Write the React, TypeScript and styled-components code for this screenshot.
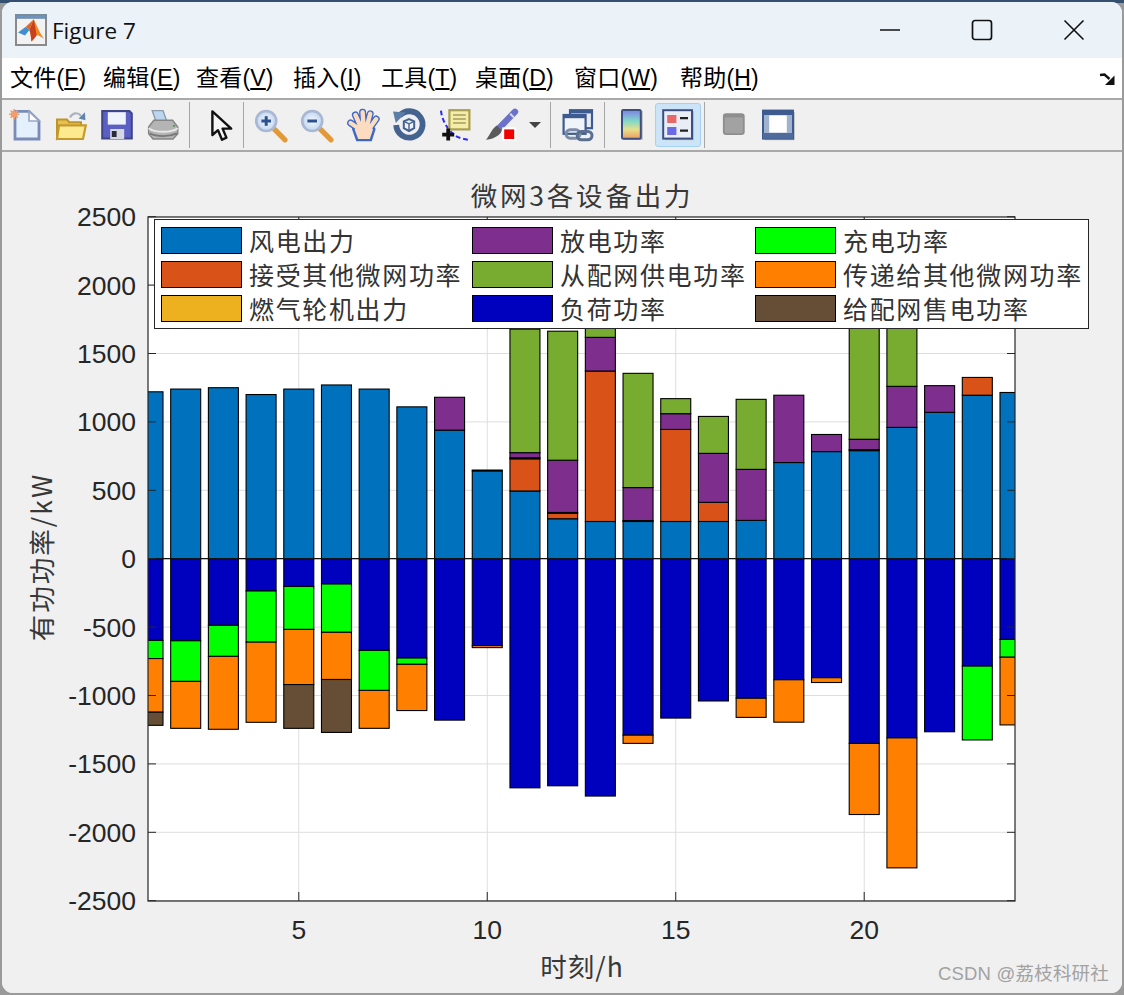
import React from 'react';
import styled, { createGlobalStyle } from 'styled-components';

const GlobalStyle = createGlobalStyle`
  html, body {
    margin: 0;
    height: 995px;
    overflow: hidden;
    background: linear-gradient(#35506e 0 3px, #9a9a9a 3px);
  }
`;

const CJK = `"Noto Sans CJK SC", "Liberation Sans", sans-serif`;
const LATIN = `"Liberation Sans", "Noto Sans CJK SC", sans-serif`;

const Window = styled.div`
  width: 1120px;
  height: 991px;
  margin: 2px;
  border-radius: 11px;
  overflow: hidden;
  background: #f0f0f0;
  display: flex;
  flex-direction: column;
`;

const TitleBar = styled.div`
  height: 56px;
  flex: none;
  background: #ebf3f9;
  display: flex;
  align-items: center;
  padding: 0 2px 0 13px;
`;

const WindowTitle = styled.span`
  margin-left: 5px;
  font: 22.5px "Open Sans", sans-serif;
  color: #111;
  flex: 1;
`;

const Control = styled.div`
  width: 92px;
  height: 56px;
  display: flex;
  align-items: center;
  justify-content: center;
`;

const MenuBar = styled.div`
  height: 42px;
  flex: none;
  background: #fff;
  border-bottom: 2px solid #a9a9a9;
  box-sizing: border-box;
  display: flex;
  align-items: center;
  padding-left: 8px;
  position: relative;
`;

const MenuItem = styled.span<{ $w: number }>`
  width: ${(p) => p.$w}px;
  font: 23px ${LATIN};
  letter-spacing: 0.2px;
  color: #000;
  white-space: nowrap;
  line-height: 40px;
`;

const MenuCorner = styled.svg`
  position: absolute;
  right: 7px;
  top: 15px;
`;

const ToolBar = styled.div`
  height: 52px;
  flex: none;
  box-sizing: border-box;
  background: #f0f0f0;
  border-bottom: 2px solid #a9a9a9;
  display: flex;
  align-items: center;
`;

const ToolButton = styled.div<{ $w?: number; $on?: boolean }>`
  width: ${(p) => p.$w ?? 46}px;
  height: 44px;
  flex: none;
  box-sizing: border-box;
  display: flex;
  align-items: center;
  justify-content: center;
  border-radius: 3px;
  background: ${(p) => (p.$on ? '#cce4f7' : 'transparent')};
  border: 1px solid ${(p) => (p.$on ? '#a5d2f2' : 'transparent')};
`;

const Sep = styled.div`
  width: 1px;
  height: 46px;
  flex: none;
  margin: 0 4px 0 3px;
  background: #a6a6a6;
`;

const Icon = styled.svg<{ $dx?: number; $sharp?: boolean }>`
  width: 32px;
  height: 32px;
  flex: none;
  overflow: visible;
  filter: ${(p) => (p.$sharp ? 'none' : 'blur(0.6px)')};
  transform: translateX(${(p) => p.$dx ?? 0}px);
`;

const Figure = styled.div`
  flex: 1;
  position: relative;
  background: #f0f0f0;
`;

const ChartSvg = styled.svg`
  display: block;
`;

const TickLabel = styled.text`
  font: 26.5px ${LATIN};
  fill: #262626;
`;

const AxisTitle = styled.text<{ $ls: number }>`
  font: 26.5px ${CJK};
  letter-spacing: ${(p) => p.$ls}px;
  fill: #383838;
`;

const Legend = styled.div`
  position: absolute;
  left: 152px;
  top: 67px;
  width: 935px;
  height: 110px;
  box-sizing: border-box;
  background: #fff;
  border: 1px solid #262626;
  padding: 6px 0 0 6px;
  display: grid;
  grid-template-columns: 311px 283px 1fr;
  grid-template-rows: repeat(3, 34px);
  grid-auto-flow: column;
`;

const LegendItem = styled.div`
  display: flex;
  align-items: center;
  height: 28px;
`;

const Swatch = styled.div<{ $c: string }>`
  width: 81px;
  height: 27px;
  flex: none;
  box-sizing: border-box;
  border: 1px solid #000;
  background: ${(p) => p.$c};
`;

const LegendText = styled.span`
  margin-left: 7px;
  font: 25px ${CJK};
  letter-spacing: 1.65px;
  color: #333;
  white-space: nowrap;
`;

const Watermark = styled.div`
  position: absolute;
  right: 13px;
  bottom: 8px;
  font: 18.5px ${LATIN};
  letter-spacing: 0.2px;
  color: #a2a2a2;
  white-space: nowrap;
`;

const C = {
  wind: '#0072bd',
  recv: '#d95319',
  gas: '#edb120',
  dis: '#7e2f8e',
  grid: '#77ac30',
  load: '#0000bf',
  chg: '#00ff00',
  send: '#ff8000',
  sell: '#654e35',
};

const legendItems: [string, string][] = [
  ['风电出力', C.wind],
  ['接受其他微网功率', C.recv],
  ['燃气轮机出力', C.gas],
  ['放电功率', C.dis],
  ['从配网供电功率', C.grid],
  ['负荷功率', C.load],
  ['充电功率', C.chg],
  ['传递给其他微网功率', C.send],
  ['给配网售电功率', C.sell],
];

// cumulative tops per hour: [colour, value]
type Stack = [string, number][];
const up: Stack[] = [
  [[C.wind, 1220]],
  [[C.wind, 1240]],
  [[C.wind, 1250]],
  [[C.wind, 1200]],
  [[C.wind, 1240]],
  [[C.wind, 1270]],
  [[C.wind, 1240]],
  [[C.wind, 1110]],
  [[C.wind, 940], [C.dis, 1180]],
  [[C.wind, 642], [C.gas, 648]],
  [[C.wind, 495], [C.recv, 730], [C.gas, 738], [C.dis, 775], [C.grid, 1678]],
  [[C.wind, 292], [C.recv, 332], [C.gas, 338], [C.dis, 720], [C.grid, 1663]],
  [[C.wind, 272], [C.recv, 1372], [C.dis, 1618], [C.grid, 1735]],
  [[C.wind, 272], [C.gas, 279], [C.dis, 520], [C.grid, 1355]],
  [[C.wind, 272], [C.recv, 945], [C.dis, 1060], [C.grid, 1170]],
  [[C.wind, 272], [C.recv, 412], [C.dis, 770], [C.grid, 1040]],
  [[C.wind, 280], [C.dis, 653], [C.grid, 1165]],
  [[C.wind, 703], [C.dis, 1195]],
  [[C.wind, 783], [C.dis, 908]],
  [[C.wind, 790], [C.gas, 797], [C.dis, 873], [C.grid, 1870]],
  [[C.wind, 960], [C.dis, 1260], [C.grid, 2260]],
  [[C.wind, 1070], [C.dis, 1265]],
  [[C.wind, 1195], [C.recv, 1325]],
  [[C.wind, 1215]],
];
const down: Stack[] = [
  [[C.load, -597], [C.chg, -730], [C.send, -1122], [C.sell, -1218]],
  [[C.load, -600], [C.chg, -897], [C.send, -1240]],
  [[C.load, -487], [C.chg, -714], [C.send, -1247]],
  [[C.load, -236], [C.chg, -610], [C.send, -1196]],
  [[C.load, -203], [C.chg, -517], [C.send, -920], [C.sell, -1240]],
  [[C.load, -185], [C.chg, -538], [C.send, -883], [C.sell, -1270]],
  [[C.load, -670], [C.chg, -963], [C.send, -1240]],
  [[C.load, -726], [C.chg, -772], [C.send, -1110]],
  [[C.load, -1180]],
  [[C.load, -635], [C.send, -650]],
  [[C.load, -1675]],
  [[C.load, -1660]],
  [[C.load, -1735]],
  [[C.load, -1290], [C.send, -1350]],
  [[C.load, -1165]],
  [[C.load, -1040]],
  [[C.load, -1020], [C.send, -1160]],
  [[C.load, -885], [C.send, -1195]],
  [[C.load, -870], [C.send, -905]],
  [[C.load, -1350], [C.send, -1870]],
  [[C.load, -1310], [C.send, -2260]],
  [[C.load, -1265]],
  [[C.load, -785], [C.chg, -1325]],
  [[C.load, -590], [C.chg, -720], [C.send, -1215]],
];

const L = 148;
const R = 1015;
const T = 217;
const B = 901;
const ZERO = 558.7;
const xOf = (h: number) => L + ((h - 1) * (R - L)) / 23;
const yOf = (v: number) => ZERO - (v * (B - T)) / 5000;
const BAR_W = 30;

function Bars({ stacks }: { stacks: Stack[] }) {
  return (
    <>
      {stacks.map((stack, i) => {
        let prev = 0;
        return stack.map(([fill, v], j) => {
          const y0 = yOf(prev);
          const y1 = yOf(v);
          prev = v;
          return (
            <rect
              key={`${i}-${j}`}
              x={xOf(i + 1) - BAR_W / 2}
              y={Math.min(y0, y1)}
              width={BAR_W}
              height={Math.abs(y1 - y0)}
              fill={fill}
              stroke="#000"
              strokeWidth={1.1}
            />
          );
        });
      })}
    </>
  );
}

function Chart() {
  const yTicks = [2500, 2000, 1500, 1000, 500, 0, -500, -1000, -1500, -2000, -2500];
  const xTicks = [5, 10, 15, 20];
  return (
    <ChartSvg width={1120} height={839} viewBox="2 152 1120 839">
      <defs>
        <clipPath id="axes">
          <rect x={L} y={T} width={R - L} height={B - T} />
        </clipPath>
      </defs>
      <rect x={L} y={T} width={R - L} height={B - T} fill="#fff" />
      {yTicks.map((v) => (
        <line key={v} x1={L} x2={R} y1={yOf(v)} y2={yOf(v)} stroke="#dedede" strokeWidth={1} />
      ))}
      {xTicks.map((h) => (
        <line key={h} x1={xOf(h)} x2={xOf(h)} y1={T} y2={B} stroke="#dedede" strokeWidth={1} />
      ))}
      <g clipPath="url(#axes)">
        <Bars stacks={up} />
        <Bars stacks={down} />
      </g>
      <line x1={L} x2={R} y1={ZERO} y2={ZERO} stroke="#111" strokeWidth={1.2} />
      {yTicks.map((v) => (
        <g key={v}>
          <line x1={L} x2={L + 8} y1={yOf(v)} y2={yOf(v)} stroke="#262626" strokeWidth={1} />
          <line x1={R - 8} x2={R} y1={yOf(v)} y2={yOf(v)} stroke="#262626" strokeWidth={1} />
          <TickLabel x={136} y={yOf(v) + 9.5} textAnchor="end">
            {v}
          </TickLabel>
        </g>
      ))}
      {xTicks.map((h) => (
        <g key={h}>
          <line x1={xOf(h)} x2={xOf(h)} y1={B - 9} y2={B} stroke="#262626" strokeWidth={1} />
          <line x1={xOf(h)} x2={xOf(h)} y1={T} y2={T + 9} stroke="#262626" strokeWidth={1} />
          <TickLabel x={xOf(h)} y={939} textAnchor="middle">
            {h}
          </TickLabel>
        </g>
      ))}
      <rect x={L} y={T} width={R - L} height={B - T} fill="none" stroke="#262626" strokeWidth={1.2} />
      <AxisTitle $ls={2.8} x={582} y={206} textAnchor="middle">
        微网3各设备出力
      </AxisTitle>
      <AxisTitle $ls={1} x={582} y={977} textAnchor="middle">
        时刻/h
      </AxisTitle>
      <AxisTitle $ls={2} x={0} y={0} textAnchor="middle" transform="translate(52 557) rotate(-90)">
        有功功率/kW
      </AxisTitle>
    </ChartSvg>
  );
}

const MatlabLogo = () => (
  <Icon viewBox="0 0 16 16" $sharp>
    <rect x="0.5" y="0.5" width="15" height="15" fill="#f2f2f2" stroke="#8a8a8a" />
    <rect x="0.5" y="0.5" width="15" height="1.6" fill="#6d95bd" stroke="#6d8aa8" strokeWidth="0.5" />
    <path d="M1.5 9.2 5.4 6.4 7.2 8 5 10.8z" fill="#3f8fd0" />
    <path d="M5.4 6.4 9.4 2.6 7.2 8z" fill="#d9692c" />
    <path d="M9.4 2.6C10.6 5 12.2 9.4 14.6 12.4 12.6 11.2 11.6 10.4 10.8 10.6 9.8 12 9 13 8.2 13.8 8 11.4 7.6 9 7.2 8z" fill="#f08a24" />
    <path d="M9.4 2.6 7.2 8C7.8 9.4 8 11.4 8.2 13.8 9 13 9.8 12 10.8 10.6 10.4 8 9.8 5 9.4 2.6z" fill="#c9401c" />
  </Icon>
);

const NewIcon = () => (
  <Icon viewBox="0 0 16 16">
    <path d="M3 1.2h7L15 6v9H3z" fill="#e4f0fb" stroke="#7b8bb8" strokeWidth="1.4" />
    <path d="M10 1.2V6h5z" fill="#fbfdff" stroke="#9aa6c6" strokeWidth="0.8" />
    <circle cx="2.6" cy="2.6" r="1.6" fill="#ee8a50" />
    <path d="M2.6 0v5.2M0 2.6h5.2M.8.8l3.6 3.6M4.4.8.8 4.4" stroke="#f0a070" strokeWidth="0.8" />
  </Icon>
);

const OpenIcon = () => (
  <Icon viewBox="0 0 16 16">
    <path d="M1 15V5.2h5l1 1.4h6V9z" fill="#e8c050" stroke="#bd9428" strokeWidth="1" />
    <path d="M1 15 2 8.2h13.4L14 15z" fill="#fde98e" stroke="#c49a2c" strokeWidth="1.1" />
    <path d="M7.5 4.2C8.8 1.8 11.4 1.4 13 3.4" fill="none" stroke="#a8b4c0" strokeWidth="1.1" />
    <path d="M15 1.6 15.2 5.6 11.8 4.8z" fill="#5f85ad" />
  </Icon>
);

const SaveIcon = () => (
  <Icon viewBox="0 0 16 16">
    <path d="M.6 1h13.6l1.2 1.2v12.6H.6z" fill="#5b5fc4" stroke="#3d4585" strokeWidth="1" />
    <rect x="3.4" y="1.6" width="9" height="6.2" fill="#eef2fb" />
    <rect x="4.6" y="10" width="7" height="5" fill="#d4d8e2" />
    <rect x="5.4" y="11" width="2.4" height="3" fill="#2a2a3a" />
  </Icon>
);

const PrintIcon = () => (
  <Icon viewBox="0 0 16 16">
    <path d="M2.6.8H8L10 6.4H4.6z" fill="#bcd6f0" stroke="#8c9cac" strokeWidth="0.7" />
    <path d="M.8 9 3.4 5.6h9.4L15.4 9v3.4L13 15H3L.8 12.4z" fill="#b4b4b4" stroke="#858585" strokeWidth="0.7" />
    <path d="M.8 9.6C4 12 12 12 15.4 9.6" fill="none" stroke="#e8e8e8" strokeWidth="1" />
    <path d="M1.4 12.2C5 14 11 14 15 12.2" fill="none" stroke="#787878" strokeWidth="0.9" />
    <path d="M13 8.4h1" stroke="#3fa04a" strokeWidth="0.9" />
  </Icon>
);

const PointerIcon = () => (
  <Icon viewBox="0 0 16 16" $dx={1}>
    <path d="M5.2 1.2V13L8 10.6 10 15.4 12.2 14.3 10.3 9.8H14.6z" fill="#f6f6f6" stroke="#111" strokeWidth="1.2" strokeLinejoin="round" />
  </Icon>
);

const Magnifier = ({ plus }: { plus?: boolean }) => (
  <Icon viewBox="0 0 16 16">
    <defs>
      <radialGradient id={plus ? 'lensA' : 'lensB'} cx="0.5" cy="0.5" r="0.6">
        <stop offset="0" stopColor="#f4f8ff" />
        <stop offset="1" stopColor="#b8d0ea" />
      </radialGradient>
    </defs>
    <path d="M9.8 10.2 15 15.4" stroke="#e09a3c" strokeWidth="2.6" strokeLinecap="round" />
    <circle cx="5.6" cy="6" r="5" fill={`url(#${plus ? 'lensA' : 'lensB'})`} stroke="#a8b8d4" strokeWidth="1.3" />
    <path d="M3.2 6h4.8" stroke="#2d5190" strokeWidth="1.5" />
    {plus && <path d="M5.6 3.6v4.8" stroke="#2d5190" strokeWidth="1.5" />}
  </Icon>
);

const handFingers = 'M7 10.5 1.8 7M7.4 10 4.2 3M8.4 10 7.8 1.6M9.6 10 11.6 2.4M10.6 10.6 14.6 5';
const HandIcon = () => (
  <Icon viewBox="0 0 16 16">
    <path d={handFingers} stroke="#3d68c4" strokeWidth="3.5" strokeLinecap="round" fill="none" />
    <path d="M3 10C4 7.6 13 7.6 13.8 10L12 15.6H5z" fill="#3d68c4" stroke="#3d68c4" strokeWidth="1" />
    <path d={handFingers} stroke="#fbdcc0" strokeWidth="2.2" strokeLinecap="round" fill="none" />
    <path d="M3.8 10.2C5 8.4 12.4 8.4 13 10.2L11.4 15H5.6z" fill="#fbdcc0" />
  </Icon>
);

const RotateIcon = () => (
  <Icon viewBox="0 0 16 16">
    <path d="M3.2 3.4A6.6 6.6 0 1 1 1.6 8" fill="none" stroke="#44648f" strokeWidth="2.9" />
    <path d="M0 1.2 6.4 1.8 1.4 7z" fill="#5d7ea6" />
    <path d="M5.4 6.2 8 5l2.6 1.2v3.4L8 11 5.4 9.6z" fill="#eef2f7" stroke="#44648f" strokeWidth="1" />
    <path d="M5.4 6.2 8 7.4l2.6-1.2M8 7.4V11" fill="none" stroke="#44648f" strokeWidth="0.7" />
  </Icon>
);

const DataTipIcon = () => (
  <Icon viewBox="0 0 16 16">
    <path d="M1 .8C1.4 6 5 11 8 13.2 10 14.6 13 15.2 15.6 15.6" fill="none" stroke="#2a2af0" strokeWidth="1" strokeDasharray="2.4 1.4" />
    <rect x="5.2" y="0.6" width="10" height="9.6" fill="#f4eca8" stroke="#a8a050" strokeWidth="1.1" />
    <path d="M7 3h6.4M7 5h6.4M7 7h6.4" stroke="#b8b070" strokeWidth="0.9" />
    <path d="M4.6 9.8v6M1.6 12.8h6" stroke="#111" strokeWidth="1.9" />
  </Icon>
);

const BrushIcon = () => (
  <Icon viewBox="0 0 16 16">
    <path d="M15 1.4 7 9.6" stroke="#6c72c8" strokeWidth="3.2" strokeLinecap="round" />
    <path d="M12.6 2.4 14.4 4.2" stroke="#d8dcf4" strokeWidth="1" />
    <path d="M5.8 8.2 8.4 10.8C7.6 13.4 3.4 15.4.4 15.4 2.2 13.6 3 10.4 5.8 8.2z" fill="#5a5a5a" />
    <rect x="8.6" y="9.2" width="7" height="6.8" fill="#fff" />
    <rect x="9.6" y="10.2" width="5" height="4.8" fill="#f00000" />
  </Icon>
);

const LinkIcon = () => (
  <Icon viewBox="0 0 16 16">
    <rect x="4" y="0.6" width="11" height="9" fill="#e6eaf2" stroke="#3d5b90" strokeWidth="1.1" />
    <rect x="4" y="0.6" width="11" height="1.6" fill="#3d5b90" />
    <rect x="0.8" y="3" width="11" height="9.4" fill="#f0f3f8" stroke="#3d5b90" strokeWidth="1.1" />
    <rect x="0.8" y="3" width="11" height="1.6" fill="#3d5b90" />
    <rect x="2" y="10.4" width="7" height="4.2" rx="2.1" fill="none" stroke="#7a8ca8" strokeWidth="1.5" />
    <rect x="7.6" y="11.2" width="7.4" height="4.2" rx="2.1" fill="none" stroke="#5b6f90" strokeWidth="1.5" />
  </Icon>
);

const ColorbarIcon = () => (
  <Icon viewBox="0 0 16 16">
    <defs>
      <linearGradient id="cbar" x1="0" y1="0" x2="0" y2="1">
        <stop offset="0" stopColor="#7f7fe8" />
        <stop offset="0.38" stopColor="#80d8c8" />
        <stop offset="0.68" stopColor="#e6e08c" />
        <stop offset="1" stopColor="#f09a60" />
      </linearGradient>
    </defs>
    <rect x="4" y="1" width="9.4" height="14.4" fill="#bcbcbc" />
    <rect x="3" y="0.5" width="9.4" height="14.4" rx="0.6" fill="url(#cbar)" stroke="#3d4f80" strokeWidth="1" />
  </Icon>
);

const LegendIcon = () => (
  <Icon viewBox="0 0 16 16">
    <rect x="1.6" y="1.2" width="14.4" height="14.4" fill="#bcbcbc" />
    <rect x="0.6" y="0.6" width="14.4" height="14.2" fill="#e9edf5" stroke="#3d4f80" strokeWidth="1" />
    <rect x="2.6" y="3" width="4.6" height="4" fill="#e86868" />
    <rect x="2.6" y="9" width="4.6" height="4" fill="#6a6ae4" />
    <path d="M9 4.6h4M9 10.8h4" stroke="#222" strokeWidth="1.1" />
  </Icon>
);

const GreyIcon = () => (
  <Icon viewBox="0 0 16 16" $dx={1}>
    <rect x="3.4" y="2.6" width="10" height="10" rx="1.2" fill="#a2a2a2" stroke="#8e8e8e" strokeWidth="0.9" />
    <rect x="3.4" y="2.6" width="10" height="1.6" fill="#8e8e8e" />
  </Icon>
);

const DockIcon = () => (
  <Icon viewBox="0 0 16 16">
    <rect x="1.4" y="1.6" width="15" height="14" fill="#bcbcbc" />
    <rect x="0.5" y="0.8" width="15" height="14" fill="#9fb2ce" stroke="#3d5b90" strokeWidth="1" />
    <rect x="3.6" y="3.2" width="8.8" height="8.6" fill="#fff" />
    <rect x="0.5" y="0.8" width="15" height="2.2" fill="#3d5b90" />
    <rect x="0.5" y="12" width="15" height="2.8" fill="#4f6c9c" />
  </Icon>
);

const menus: [string, string, number][] = [
  ['文件', 'F', 93],
  ['编辑', 'E', 93],
  ['查看', 'V', 97],
  ['插入', 'I', 88],
  ['工具', 'T', 94],
  ['桌面', 'D', 99],
  ['窗口', 'W', 106],
  ['帮助', 'H', 90],
];

export default function App() {
  return (
    <>
      <GlobalStyle />
      <Window>
        <TitleBar>
          <MatlabLogo />
          <WindowTitle>Figure 7</WindowTitle>
          <Control>
            <svg width="22" height="22" viewBox="0 0 22 22">
              <path d="M1 11h20" stroke="#111" strokeWidth="1.6" />
            </svg>
          </Control>
          <Control>
            <svg width="22" height="22" viewBox="0 0 22 22">
              <rect x="1.5" y="1.5" width="19" height="19" rx="2.5" fill="none" stroke="#111" strokeWidth="1.7" />
            </svg>
          </Control>
          <Control>
            <svg width="22" height="22" viewBox="0 0 22 22">
              <path d="M1.5 1.5l19 19M20.5 1.5l-19 19" stroke="#111" strokeWidth="1.6" />
            </svg>
          </Control>
        </TitleBar>
        <MenuBar>
          {menus.map(([label, key, w]) => (
            <MenuItem key={key} $w={w}>
              {label}(<u>{key}</u>)
            </MenuItem>
          ))}
          <MenuCorner width="16" height="12" viewBox="0 0 16 12">
            <path d="M1 2 5.5 1.5 10.5 6" fill="none" stroke="#111" strokeWidth="2.4" />
            <path d="M15.5 2.5V12H6z" fill="#111" />
          </MenuCorner>
        </MenuBar>
        <ToolBar>
          <ToolButton><NewIcon /></ToolButton>
          <ToolButton><OpenIcon /></ToolButton>
          <ToolButton><SaveIcon /></ToolButton>
          <ToolButton><PrintIcon /></ToolButton>
          <Sep />
          <ToolButton><PointerIcon /></ToolButton>
          <Sep />
          <ToolButton><Magnifier plus /></ToolButton>
          <ToolButton><Magnifier /></ToolButton>
          <ToolButton><HandIcon /></ToolButton>
          <ToolButton><RotateIcon /></ToolButton>
          <ToolButton><DataTipIcon /></ToolButton>
          <ToolButton $w={69}>
            <BrushIcon />
            <svg width="12" height="6" viewBox="0 0 12 6" style={{ marginLeft: 12 }}>
              <path d="M0 0h12L6 6z" fill="#444" />
            </svg>
          </ToolButton>
          <Sep />
          <ToolButton><LinkIcon /></ToolButton>
          <Sep />
          <ToolButton><ColorbarIcon /></ToolButton>
          <ToolButton $on><LegendIcon /></ToolButton>
          <Sep />
          <ToolButton><GreyIcon /></ToolButton>
          <ToolButton><DockIcon /></ToolButton>
        </ToolBar>
        <Figure>
          <Chart />
          <Legend>
            {legendItems.map(([label, color]) => (
              <LegendItem key={label}>
                <Swatch $c={color} />
                <LegendText>{label}</LegendText>
              </LegendItem>
            ))}
          </Legend>
          <Watermark>CSDN @荔枝科研社</Watermark>
        </Figure>
      </Window>
    </>
  );
}
